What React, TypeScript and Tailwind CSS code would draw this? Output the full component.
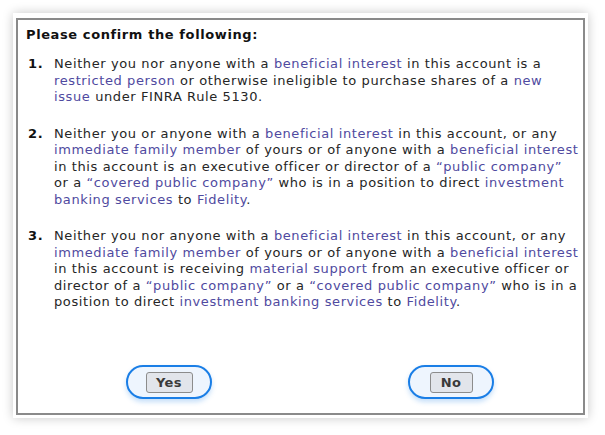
const link = 'text-[#4f4aa0]'

function L({ children }: { children: React.ReactNode }) {
  return <span className={link}>{children}</span>
}

const items: React.ReactNode[] = [
  <>
    Neither you nor anyone with a <L>beneficial interest</L> in this account is a <L>restricted person</L> or otherwise ineligible to purchase shares of a <L>new issue</L> under FINRA Rule 5130.
  </>,
  <>
    Neither you or anyone with a <L>beneficial interest</L> in this account, or any <L>immediate family member</L> of yours or of anyone with a <L>beneficial interest</L> in this account is an executive officer or director of a <L>“public company”</L> or a <L>“covered public company”</L> who is in a position to direct <L>investment banking services</L> to <L>Fidelity</L>.
  </>,
  <>
    Neither you nor anyone with a <L>beneficial interest</L> in this account, or any <L>immediate family member</L> of yours or of anyone with a <L>beneficial interest</L> in this account is receiving <L>material support</L> from an executive officer or director of a <L>“public company”</L> or a <L>“covered public company”</L> who is in a position to direct <L>investment banking services</L> to <L>Fidelity</L>.
  </>,
]

function PillButton({ label, inner }: { label: string; inner: string }) {
  return (
    <div className="flex h-[34px] w-[86px] items-center justify-center rounded-full border-2 border-[#1a7ee6] bg-[#eef5fe] shadow-[0_3px_5px_rgba(26,126,230,0.25)]">
      <button className={`h-[21px] ${inner} rounded-[3px] border border-[#8c8c8c] bg-[#e2e5eb] text-[13px] font-bold leading-none tracking-[0.4px] text-[#3a3a3a]`}>
        {label}
      </button>
    </div>
  )
}

export default function App() {
  return (
    <div className="h-[435px] w-[605px] bg-white pl-[13px] pt-[13px] font-['DejaVu_Sans',Verdana,sans-serif]">
      <div className="h-[405px] w-[575px] bg-white pl-[3px] pr-[3px] pt-[5px] pb-[3px] shadow-[0_0_10px_rgba(0,0,0,0.22)]">
        <div className="flex h-full flex-col border-2 border-[#8a8a8a] pl-[8px] pr-[3px]">
          <h1 className="mt-[6px] text-[13px] font-bold leading-[17px] tracking-[0.6px] text-[#111]">Please confirm the following:</h1>
          <ol className="mt-[13px] flex flex-col gap-[20px]">
            {items.map((content, i) => (
              <li key={i} className="flex text-[13px] leading-[16.5px] tracking-[0.6px] text-[#262626]">
                <span className="w-[28px] shrink-0 pl-[2px] font-bold text-[#111]">{i + 1}.</span>
                <span>{content}</span>
              </li>
            ))}
          </ol>
          <div className="mt-auto mb-[14px] flex gap-[196px] pl-[100px]">
            <PillButton label="Yes" inner="w-[47px]" />
            <PillButton label="No" inner="w-[43px]" />
          </div>
        </div>
      </div>
    </div>
  )
}
